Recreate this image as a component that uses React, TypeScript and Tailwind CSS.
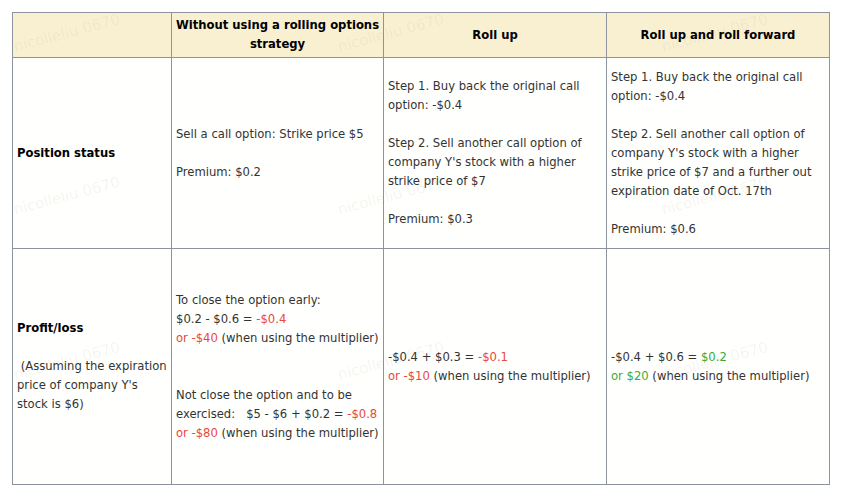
import type { ReactNode } from "react";

const font = { fontFamily: '"DejaVu Sans", Verdana, sans-serif' };

const cellBase = "border border-[#8e949f] px-[4px] align-middle whitespace-nowrap";
const cellClass = `${cellBase} text-left`;
const headClass = `${cellBase} text-center`;

function Red({ children }: { children: ReactNode }) {
  return <span className="text-[#e8473c]">{children}</span>;
}

function Green({ children }: { children: ReactNode }) {
  return <span className="text-[#3aaa35]">{children}</span>;
}

function Gap() {
  return <div className="h-[19px]" />;
}

const watermarks = [
  { x: 14, y: 22 },
  { x: 338, y: 22 },
  { x: 662, y: 22 },
  { x: 14, y: 185 },
  { x: 338, y: 185 },
  { x: 662, y: 185 },
  { x: 14, y: 350 },
  { x: 338, y: 350 },
  { x: 662, y: 350 },
];

export default function App() {
  return (
    <div className="relative h-[497px] w-[842px] bg-white" style={font}>
      <div className="pl-[12px] pt-[12px]">
        <table className="w-[817px] table-fixed border-collapse text-[11.6px] leading-[19px] text-[#333]">
          <colgroup>
            <col className="w-[159px]" />
            <col className="w-[212px]" />
            <col className="w-[223px]" />
            <col className="w-[223px]" />
          </colgroup>
          <thead>
            <tr className="h-[45px] bg-[#f9f0d2] font-bold text-black">
              <th className={headClass} />
              <th className={headClass}>
                Without using a rolling options
                <br />
                strategy
              </th>
              <th className={headClass}>Roll up</th>
              <th className={headClass}>Roll up and roll forward</th>
            </tr>
          </thead>
          <tbody className="bg-[#fffffd]">
            <tr className="h-[191px]">
              <td className={`${cellClass} font-bold text-black`}>Position status</td>
              <td className={cellClass}>
                <div>Sell a call option: Strike price $5</div>
                <Gap />
                <div>Premium: $0.2</div>
              </td>
              <td className={cellClass}>
                <div>
                  Step 1. Buy back the original call
                  <br />
                  option: -$0.4
                </div>
                <Gap />
                <div>
                  Step 2. Sell another call option of
                  <br />
                  company Y's stock with a higher
                  <br />
                  strike price of $7
                </div>
                <Gap />
                <div>Premium: $0.3</div>
              </td>
              <td className={cellClass}>
                <div>
                  Step 1. Buy back the original call
                  <br />
                  option: -$0.4
                </div>
                <Gap />
                <div>
                  Step 2. Sell another call option of
                  <br />
                  company Y's stock with a higher
                  <br />
                  strike price of $7 and a further out
                  <br />
                  expiration date of Oct. 17th
                </div>
                <Gap />
                <div>Premium: $0.6</div>
              </td>
            </tr>
            <tr className="h-[236px]">
              <td className={cellClass}>
                <div className="font-bold text-black">Profit/loss</div>
                <Gap />
                <div>
                  &nbsp;(Assuming the expiration
                  <br />
                  price of company Y's
                  <br />
                  stock is $6)
                </div>
              </td>
              <td className={cellClass}>
                <div>
                  To close the option early:
                  <br />
                  $0.2 - $0.6 = <Red>-$0.4</Red>
                  <br />
                  <Red>or -$40</Red> (when using the multiplier)
                </div>
                <Gap />
                <Gap />
                <div>
                  Not close the option and to be
                  <br />
                  exercised:&nbsp;&nbsp; $5 - $6 + $0.2 = <Red>-$0.8</Red>
                  <br />
                  <Red>or -$80</Red> (when using the multiplier)
                </div>
              </td>
              <td className={cellClass}>
                <div>
                  -$0.4 + $0.3 = <Red>-$0.1</Red>
                  <br />
                  <Red>or -$10</Red> (when using the multiplier)
                </div>
              </td>
              <td className={cellClass}>
                <div>
                  -$0.4 + $0.6 = <Green>$0.2</Green>
                  <br />
                  <Green>or $20</Green> (when using the multiplier)
                </div>
              </td>
            </tr>
          </tbody>
        </table>
      </div>

      {/* faint watermark overlay */}
      <div className="pointer-events-none absolute inset-0" aria-hidden="true">
        {watermarks.map((w) => (
          <span
            key={`${w.x}-${w.y}`}
            className="absolute origin-left -rotate-[15deg] text-[15px] text-[rgba(110,90,50,0.07)]"
            style={{ left: w.x, top: w.y + 14 }}
          >
            nicolleliu 0670
          </span>
        ))}
      </div>
    </div>
  );
}
